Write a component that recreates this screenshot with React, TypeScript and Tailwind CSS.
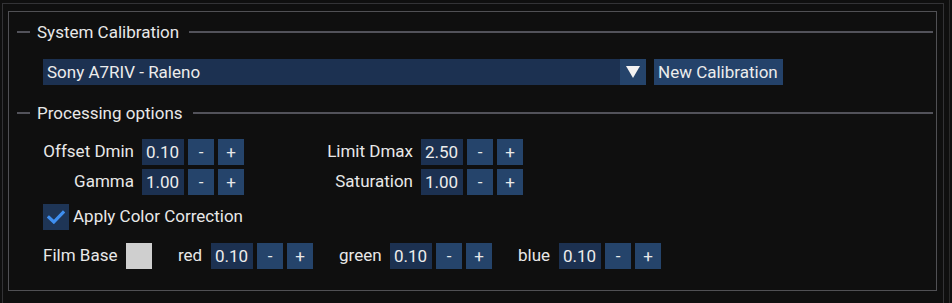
import React from "react";

const font = { fontFamily: "Roboto, 'Liberation Sans', sans-serif" };

function Stepper({ value }: { value: string }) {
  return (
    <div className="flex items-center gap-[4px]">
      <div className="w-[42px] h-[26px] bg-[#1c3151] pl-[4px] leading-[26px] text-[#ececec]">{value}</div>
      <div className="w-[26px] h-[26px] bg-[#25446b] flex items-center justify-center text-[#e8e8e8] leading-[26px]">-</div>
      <div className="w-[26px] h-[26px] bg-[#25446b] flex items-center justify-center text-[#e8e8e8] leading-[26px]">+</div>
    </div>
  );
}

function Header({ title }: { title: string }) {
  return (
    <div className="flex items-center h-[20px] pl-[8px] pr-[3px]">
      <div className="w-[13px] h-[2px] bg-[#52525a]" />
      <div className="ml-[7px] text-[#e8e8e8] leading-[20px] whitespace-nowrap">{title}</div>
      <div className="ml-[10px] flex-1 h-[2px] bg-[#52525a]" />
    </div>
  );
}

export default function App() {
  return (
    <div className="w-[952px] h-[303px] bg-[#0f0f0f] overflow-hidden relative text-[17px]" style={font}>
      <div className="absolute top-0 left-[949px] w-px h-[303px] bg-[#2a2a2a]" />
      <div className="pl-[2px] pt-[3px]">
        <div className="w-[942px] h-[300px] border-l border-t border-r border-[#333336] pl-[5px] pt-[7px]">
          <div className="w-[929px] h-[280px] border border-[#505054] flex flex-col">
            <div className="mt-[10px]">
              <Header title="System Calibration" />
            </div>
            <div className="mt-[17px] pl-[34px] flex items-center h-[26px]">
              <div className="w-[577px] h-[26px] bg-[#1c3151] pl-[4px] leading-[26px] text-[#ececec]">Sony A7RIV - Raleno</div>
              <div className="w-[26px] h-[26px] bg-[#25446b] flex items-center justify-center">
                <svg width="14" height="12" viewBox="0 0 14 12">
                  <path d="M0 0 L14 0 L7 12 Z" fill="#f2f2f2" />
                </svg>
              </div>
              <div className="ml-[8px] w-[129px] h-[26px] bg-[#24426a] pl-[4px] leading-[26px] text-[#ececec] whitespace-nowrap">New Calibration</div>
            </div>
            <div className="mt-[18px]">
              <Header title="Processing options" />
            </div>
            <div className="mt-[16px] pl-[34px] flex flex-col">
              <div className="flex items-center h-[26px]">
                <div className="w-[91px] text-right text-[#e8e8e8] whitespace-nowrap">Offset Dmin</div>
                <div className="ml-[8px]"><Stepper value="0.10" /></div>
                <div className="w-[169px] text-right text-[#e8e8e8] whitespace-nowrap">Limit Dmax</div>
                <div className="ml-[8px]"><Stepper value="2.50" /></div>
              </div>
              <div className="mt-[4px] flex items-center h-[26px]">
                <div className="w-[91px] text-right text-[#e8e8e8] whitespace-nowrap">Gamma</div>
                <div className="ml-[8px]"><Stepper value="1.00" /></div>
                <div className="w-[169px] text-right text-[#e8e8e8] whitespace-nowrap">Saturation</div>
                <div className="ml-[8px]"><Stepper value="1.00" /></div>
              </div>
              <div className="mt-[9px] flex items-center h-[26px]">
                <div className="w-[26px] h-[26px] bg-[#1e3556] flex items-center justify-center">
                  <svg width="18" height="14" viewBox="0 0 18 14">
                    <path d="M2 7.5 L6.8 12 L16 2.5" stroke="#3f8ff0" strokeWidth="3.2" fill="none" strokeLinecap="square" />
                  </svg>
                </div>
                <div className="ml-[4px] text-[#e8e8e8] whitespace-nowrap">Apply Color Correction</div>
              </div>
              <div className="mt-[13px] flex items-center h-[26px]">
                <div className="w-[83px] text-[#e8e8e8] whitespace-nowrap">Film Base</div>
                <div className="w-[26px] h-[26px] bg-[#cfcfcf]" />
                <div className="ml-[26px] w-[24px] text-[#e8e8e8]">red</div>
                <div className="ml-[9px]"><Stepper value="0.10" /></div>
                <div className="ml-[26px] w-[42px] text-[#e8e8e8]">green</div>
                <div className="ml-[9px]"><Stepper value="0.10" /></div>
                <div className="ml-[26px] w-[32px] text-[#e8e8e8]">blue</div>
                <div className="ml-[9px]"><Stepper value="0.10" /></div>
              </div>
            </div>
          </div>
        </div>
      </div>
    </div>
  );
}
